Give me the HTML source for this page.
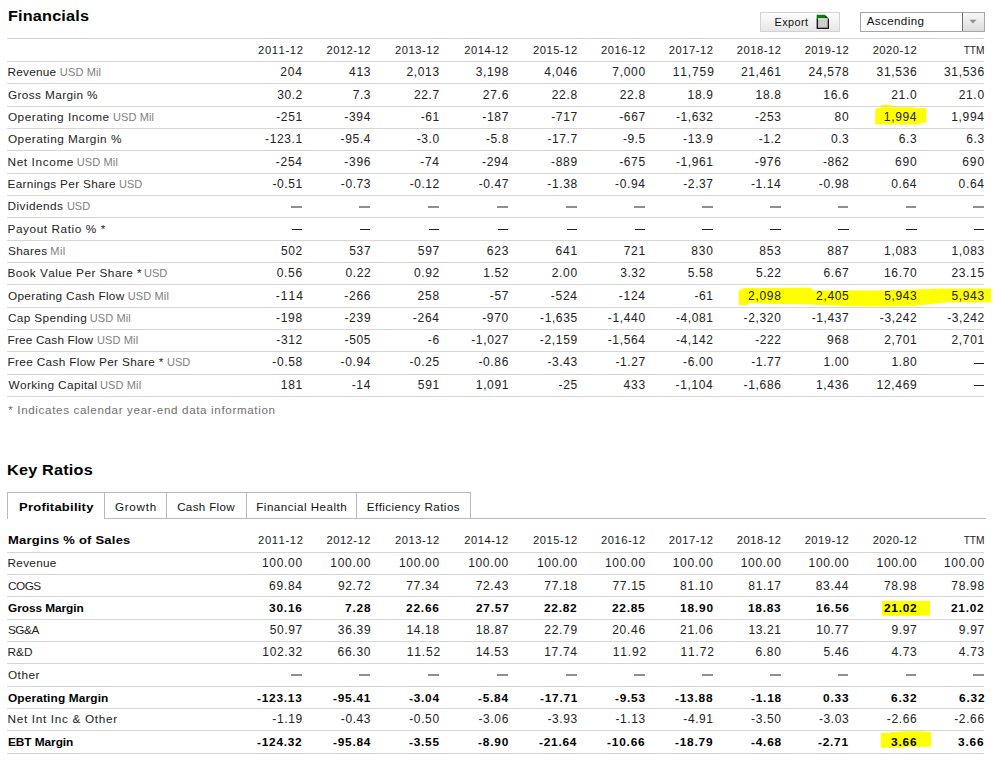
<!DOCTYPE html>
<html><head><meta charset="utf-8"><title>Financials</title>
<style>
html,body{margin:0;padding:0;background:#fff;}
body{width:1000px;height:762px;position:relative;overflow:hidden;font-family:"Liberation Sans",sans-serif;}
.t{position:absolute;white-space:nowrap;line-height:20px;font-kerning:none;-webkit-text-stroke:0.0px currentColor;}
</style></head><body>
<div class="t" style="left:7.72px;top:6.00px;font-size:14.5px;letter-spacing:0.150px;transform:scaleX(1.120);transform-origin:0 0;font-weight:bold;color:#000;">Financials</div>
<div style="position:absolute;left:760px;top:12px;width:80px;height:20px;box-sizing:border-box;border:1px solid #d2d2d2;background:linear-gradient(#fdfdfd,#e6e6e6);"></div>
<div class="t" style="left:774.61px;top:12.00px;font-size:10.9px;letter-spacing:0.392px;color:#111;">Export</div>
<svg style="position:absolute;left:816px;top:14px" width="14" height="16" viewBox="0 0 14 16">
<path d="M0.6 4.2 H8.8 V0.8 L13 5 V15 H0.6 Z" fill="#1c1c1c"/>
<rect x="0.7" y="0.8" width="8.2" height="3.6" fill="#008400"/>
<rect x="2" y="4.4" width="9.7" height="9.3" fill="#c4c4c4"/>
<rect x="2" y="4.4" width="9.7" height="1.1" fill="#ededed"/>
<path d="M4.6 6.6 V12.6 M7.1 6.6 V12.6 M9.6 6.6 V12.6" stroke="#e6e6e6" stroke-width="0.8"/>
</svg>
<div style="position:absolute;left:860px;top:12px;width:125px;height:20px;box-sizing:border-box;border:1px solid #a6a6a6;background:#fff;"></div>
<div style="position:absolute;left:962px;top:13px;width:22px;height:18px;box-sizing:border-box;border-left:1px solid #707070;background:linear-gradient(#f8f8f8,#dcdcdc);"></div>
<svg style="position:absolute;left:969px;top:19px" width="8" height="5"><path d="M0.5 0.8 H7.5 L4 4.5 Z" fill="#8c8c8c"/></svg>
<div class="t" style="left:866.78px;top:11.00px;font-size:11.6px;letter-spacing:0.375px;color:#111;">Ascending</div>
<div style="position:absolute;left:7px;top:37.90px;width:977px;height:1px;background:#d6d6d6"></div>
<div style="position:absolute;left:7px;top:61.10px;width:977px;height:1px;background:#d6d6d6"></div>
<div class="t" style="left:258.04px;top:40.00px;font-size:11.2px;letter-spacing:0.640px;color:#1a1a1a;">2011-12</div>
<div class="t" style="left:326.44px;top:40.00px;font-size:11.2px;letter-spacing:0.503px;color:#1a1a1a;">2012-12</div>
<div class="t" style="left:395.04px;top:40.00px;font-size:11.2px;letter-spacing:0.503px;color:#1a1a1a;">2013-12</div>
<div class="t" style="left:464.24px;top:40.00px;font-size:11.2px;letter-spacing:0.503px;color:#1a1a1a;">2014-12</div>
<div class="t" style="left:533.04px;top:40.00px;font-size:11.2px;letter-spacing:0.503px;color:#1a1a1a;">2015-12</div>
<div class="t" style="left:601.04px;top:40.00px;font-size:11.2px;letter-spacing:0.503px;color:#1a1a1a;">2016-12</div>
<div class="t" style="left:668.84px;top:40.00px;font-size:11.2px;letter-spacing:0.503px;color:#1a1a1a;">2017-12</div>
<div class="t" style="left:736.84px;top:40.00px;font-size:11.2px;letter-spacing:0.503px;color:#1a1a1a;">2018-12</div>
<div class="t" style="left:804.64px;top:40.00px;font-size:11.2px;letter-spacing:0.503px;color:#1a1a1a;">2019-12</div>
<div class="t" style="left:872.64px;top:40.00px;font-size:11.2px;letter-spacing:0.503px;color:#1a1a1a;">2020-12</div>
<div class="t" style="left:963.78px;top:41.00px;font-size:10.2px;letter-spacing:-0.154px;color:#222;">TTM</div>
<svg style="position:absolute;left:0;top:0" width="1000" height="762"><g fill="#ffff00"><path d="M875.2 109.5 L876 108.2 L880.5 108 L881 105.2 L886 104.8 L892.5 105.6 L893.5 107.2 L914 107.2 L915 108 L926.3 108 L926.3 122.8 L921 122.8 L920.5 124.5 L875.2 124.5 Z"/><path d="M738.7 290.5 L744 288 L811 287.7 L813 290.5 L877 290.5 L913 289.5 L947 288.5 L991 288.5 L991 302.4 L947 302.4 L913 305.9 L878 306.6 L845 305.9 L808 304.5 L748 303.1 L748 304.9 L738.7 304.9 Z"/><path d="M881.9 601 L930 601 L930 615.8 L881.9 615.8 Z"/><path d="M880.8 733 L890.3 733 L890.3 732 L899.5 732 L899.5 731.2 L924.6 731.2 L924.6 732 L931 732 L931 746.8 L904.3 746.8 L904.3 747.7 L880.8 747.7 Z"/></g></svg>
<div style="position:absolute;left:7px;top:83.42px;width:977px;height:1px;background:#d6d6d6"></div>
<div class="t" style="left:7.53px;top:62.00px;font-size:11.8px;letter-spacing:0.226px;color:#222;">Revenue</div>
<div class="t" style="left:59.86px;top:62.00px;font-size:11.0px;letter-spacing:0.123px;color:#808080;">USD Mil</div>
<div class="t" style="left:280.23px;top:62.00px;font-size:12.0px;letter-spacing:0.843px;color:#222;">204</div>
<div class="t" style="left:348.96px;top:62.00px;font-size:12.0px;letter-spacing:0.766px;color:#222;">413</div>
<div class="t" style="left:406.40px;top:62.00px;font-size:12.0px;letter-spacing:0.672px;color:#222;">2,013</div>
<div class="t" style="left:475.65px;top:62.00px;font-size:12.0px;letter-spacing:0.661px;color:#222;">3,198</div>
<div class="t" style="left:544.24px;top:62.00px;font-size:12.0px;letter-spacing:0.712px;color:#222;">4,046</div>
<div class="t" style="left:612.34px;top:62.00px;font-size:12.0px;letter-spacing:0.675px;color:#222;">7,000</div>
<div class="t" style="left:672.78px;top:62.00px;font-size:12.0px;letter-spacing:0.874px;color:#222;">11,759</div>
<div class="t" style="left:740.92px;top:62.00px;font-size:12.0px;letter-spacing:0.670px;color:#222;">21,461</div>
<div class="t" style="left:808.44px;top:62.00px;font-size:12.0px;letter-spacing:0.714px;color:#222;">24,578</div>
<div class="t" style="left:876.56px;top:62.00px;font-size:12.0px;letter-spacing:0.690px;color:#222;">31,536</div>
<div class="t" style="left:943.96px;top:62.00px;font-size:12.0px;letter-spacing:0.690px;color:#222;">31,536</div>
<div style="position:absolute;left:7px;top:105.74px;width:977px;height:1px;background:#d6d6d6"></div>
<div class="t" style="left:7.91px;top:85.00px;font-size:11.8px;letter-spacing:0.394px;color:#222;">Gross Margin %</div>
<div class="t" style="left:277.24px;top:85.00px;font-size:12.0px;letter-spacing:0.535px;color:#222;">30.2</div>
<div class="t" style="left:352.73px;top:85.00px;font-size:12.0px;letter-spacing:0.559px;color:#222;">7.3</div>
<div class="t" style="left:413.88px;top:85.00px;font-size:12.0px;letter-spacing:0.653px;color:#222;">22.7</div>
<div class="t" style="left:482.82px;top:85.00px;font-size:12.0px;letter-spacing:0.716px;color:#222;">27.6</div>
<div class="t" style="left:551.68px;top:85.00px;font-size:12.0px;letter-spacing:0.695px;color:#222;">22.8</div>
<div class="t" style="left:619.68px;top:85.00px;font-size:12.0px;letter-spacing:0.695px;color:#222;">22.8</div>
<div class="t" style="left:687.62px;top:85.00px;font-size:12.0px;letter-spacing:0.663px;color:#222;">18.9</div>
<div class="t" style="left:755.60px;top:85.00px;font-size:12.0px;letter-spacing:0.655px;color:#222;">18.8</div>
<div class="t" style="left:823.34px;top:85.00px;font-size:12.0px;letter-spacing:0.676px;color:#222;">16.6</div>
<div class="t" style="left:891.26px;top:85.00px;font-size:12.0px;letter-spacing:0.683px;color:#222;">21.0</div>
<div class="t" style="left:958.66px;top:85.00px;font-size:12.0px;letter-spacing:0.683px;color:#222;">21.0</div>
<div style="position:absolute;left:7px;top:128.06px;width:977px;height:1px;background:#d6d6d6"></div>
<div class="t" style="left:7.94px;top:107.00px;font-size:11.8px;letter-spacing:0.492px;color:#222;">Operating Income</div>
<div class="t" style="left:112.96px;top:107.00px;font-size:11.0px;letter-spacing:0.123px;color:#808080;">USD Mil</div>
<div class="t" style="left:276.24px;top:107.00px;font-size:12.0px;letter-spacing:0.639px;color:#222;">-251</div>
<div class="t" style="left:344.22px;top:107.00px;font-size:12.0px;letter-spacing:0.704px;color:#222;">-394</div>
<div class="t" style="left:420.66px;top:107.00px;font-size:12.0px;letter-spacing:0.586px;color:#222;">-61</div>
<div class="t" style="left:482.37px;top:107.00px;font-size:12.0px;letter-spacing:0.671px;color:#222;">-187</div>
<div class="t" style="left:551.17px;top:107.00px;font-size:12.0px;letter-spacing:0.671px;color:#222;">-717</div>
<div class="t" style="left:619.17px;top:107.00px;font-size:12.0px;letter-spacing:0.671px;color:#222;">-667</div>
<div class="t" style="left:676.02px;top:107.00px;font-size:12.0px;letter-spacing:0.592px;color:#222;">-1,632</div>
<div class="t" style="left:754.90px;top:107.00px;font-size:12.0px;letter-spacing:0.666px;color:#222;">-253</div>
<div class="t" style="left:834.41px;top:107.00px;font-size:12.0px;letter-spacing:0.911px;color:#222;">80</div>
<div class="t" style="left:883.83px;top:107.00px;font-size:12.0px;letter-spacing:0.671px;color:#222;">1,994</div>
<div class="t" style="left:951.23px;top:107.00px;font-size:12.0px;letter-spacing:0.671px;color:#222;">1,994</div>
<div style="position:absolute;left:7px;top:150.38px;width:977px;height:1px;background:#d6d6d6"></div>
<div class="t" style="left:7.94px;top:129.00px;font-size:11.8px;letter-spacing:0.502px;color:#222;">Operating Margin %</div>
<div class="t" style="left:265.12px;top:129.00px;font-size:12.0px;letter-spacing:0.606px;color:#222;">-123.1</div>
<div class="t" style="left:340.52px;top:129.00px;font-size:12.0px;letter-spacing:0.621px;color:#222;">-95.4</div>
<div class="t" style="left:416.66px;top:129.00px;font-size:12.0px;letter-spacing:0.574px;color:#222;">-3.0</div>
<div class="t" style="left:485.89px;top:129.00px;font-size:12.0px;letter-spacing:0.585px;color:#222;">-5.8</div>
<div class="t" style="left:547.47px;top:129.00px;font-size:12.0px;letter-spacing:0.596px;color:#222;">-17.7</div>
<div class="t" style="left:622.91px;top:129.00px;font-size:12.0px;letter-spacing:0.503px;color:#222;">-9.5</div>
<div class="t" style="left:683.09px;top:129.00px;font-size:12.0px;letter-spacing:0.633px;color:#222;">-13.9</div>
<div class="t" style="left:758.86px;top:129.00px;font-size:12.0px;letter-spacing:0.487px;color:#222;">-1.2</div>
<div class="t" style="left:830.89px;top:129.00px;font-size:12.0px;letter-spacing:0.578px;color:#222;">0.3</div>
<div class="t" style="left:898.79px;top:129.00px;font-size:12.0px;letter-spacing:0.628px;color:#222;">6.3</div>
<div class="t" style="left:966.19px;top:129.00px;font-size:12.0px;letter-spacing:0.628px;color:#222;">6.3</div>
<div style="position:absolute;left:7px;top:172.70px;width:977px;height:1px;background:#d6d6d6"></div>
<div class="t" style="left:7.53px;top:152.00px;font-size:11.8px;letter-spacing:0.617px;color:#222;">Net Income</div>
<div class="t" style="left:76.76px;top:152.00px;font-size:11.0px;letter-spacing:0.123px;color:#808080;">USD Mil</div>
<div class="t" style="left:275.82px;top:152.00px;font-size:12.0px;letter-spacing:0.704px;color:#222;">-254</div>
<div class="t" style="left:344.30px;top:152.00px;font-size:12.0px;letter-spacing:0.733px;color:#222;">-396</div>
<div class="t" style="left:420.24px;top:152.00px;font-size:12.0px;letter-spacing:0.684px;color:#222;">-74</div>
<div class="t" style="left:482.02px;top:152.00px;font-size:12.0px;letter-spacing:0.704px;color:#222;">-294</div>
<div class="t" style="left:550.99px;top:152.00px;font-size:12.0px;letter-spacing:0.720px;color:#222;">-889</div>
<div class="t" style="left:619.19px;top:152.00px;font-size:12.0px;letter-spacing:0.631px;color:#222;">-675</div>
<div class="t" style="left:675.92px;top:152.00px;font-size:12.0px;letter-spacing:0.606px;color:#222;">-1,961</div>
<div class="t" style="left:754.70px;top:152.00px;font-size:12.0px;letter-spacing:0.733px;color:#222;">-976</div>
<div class="t" style="left:822.94px;top:152.00px;font-size:12.0px;letter-spacing:0.614px;color:#222;">-862</div>
<div class="t" style="left:894.92px;top:152.00px;font-size:12.0px;letter-spacing:0.860px;color:#222;">690</div>
<div class="t" style="left:962.32px;top:152.00px;font-size:12.0px;letter-spacing:0.860px;color:#222;">690</div>
<div style="position:absolute;left:7px;top:195.02px;width:977px;height:1px;background:#d6d6d6"></div>
<div class="t" style="left:7.53px;top:174.00px;font-size:11.8px;letter-spacing:0.306px;color:#222;">Earnings Per Share</div>
<div class="t" style="left:119.06px;top:174.00px;font-size:11.0px;letter-spacing:-0.030px;color:#808080;">USD</div>
<div class="t" style="left:272.54px;top:174.00px;font-size:12.0px;letter-spacing:0.572px;color:#222;">-0.51</div>
<div class="t" style="left:340.80px;top:174.00px;font-size:12.0px;letter-spacing:0.593px;color:#222;">-0.73</div>
<div class="t" style="left:409.64px;top:174.00px;font-size:12.0px;letter-spacing:0.554px;color:#222;">-0.12</div>
<div class="t" style="left:478.67px;top:174.00px;font-size:12.0px;letter-spacing:0.596px;color:#222;">-0.47</div>
<div class="t" style="left:547.27px;top:174.00px;font-size:12.0px;letter-spacing:0.627px;color:#222;">-1.38</div>
<div class="t" style="left:615.12px;top:174.00px;font-size:12.0px;letter-spacing:0.621px;color:#222;">-0.94</div>
<div class="t" style="left:683.27px;top:174.00px;font-size:12.0px;letter-spacing:0.596px;color:#222;">-2.37</div>
<div class="t" style="left:750.92px;top:174.00px;font-size:12.0px;letter-spacing:0.621px;color:#222;">-1.14</div>
<div class="t" style="left:818.87px;top:174.00px;font-size:12.0px;letter-spacing:0.627px;color:#222;">-0.98</div>
<div class="t" style="left:891.19px;top:174.00px;font-size:12.0px;letter-spacing:0.667px;color:#222;">0.64</div>
<div class="t" style="left:958.59px;top:174.00px;font-size:12.0px;letter-spacing:0.667px;color:#222;">0.64</div>
<div style="position:absolute;left:7px;top:217.34px;width:977px;height:1px;background:#d6d6d6"></div>
<div class="t" style="left:7.53px;top:196.00px;font-size:11.8px;letter-spacing:0.459px;color:#222;">Dividends</div>
<div class="t" style="left:66.96px;top:196.00px;font-size:11.0px;letter-spacing:-0.030px;color:#808080;">USD</div>
<div style="position:absolute;left:291.0px;top:206px;width:10.800000000000011px;height:2px;background:#8f8f8f"></div>
<div style="position:absolute;left:359.4px;top:206px;width:10.800000000000011px;height:2px;background:#8f8f8f"></div>
<div style="position:absolute;left:428.0px;top:206px;width:10.800000000000011px;height:2px;background:#8f8f8f"></div>
<div style="position:absolute;left:497.2px;top:206px;width:10.800000000000011px;height:2px;background:#8f8f8f"></div>
<div style="position:absolute;left:566.0px;top:206px;width:10.800000000000068px;height:2px;background:#8f8f8f"></div>
<div style="position:absolute;left:634.0px;top:206px;width:10.800000000000068px;height:2px;background:#8f8f8f"></div>
<div style="position:absolute;left:701.8px;top:206px;width:10.800000000000068px;height:2px;background:#8f8f8f"></div>
<div style="position:absolute;left:769.8px;top:206px;width:10.800000000000068px;height:2px;background:#8f8f8f"></div>
<div style="position:absolute;left:837.6px;top:206px;width:10.800000000000068px;height:2px;background:#8f8f8f"></div>
<div style="position:absolute;left:905.6px;top:206px;width:10.800000000000068px;height:2px;background:#8f8f8f"></div>
<div style="position:absolute;left:973.0px;top:206px;width:10.800000000000068px;height:2px;background:#8f8f8f"></div>
<div style="position:absolute;left:7px;top:239.66px;width:977px;height:1px;background:#d6d6d6"></div>
<div class="t" style="left:7.53px;top:219.00px;font-size:11.8px;letter-spacing:0.570px;color:#222;">Payout Ratio % *</div>
<div style="position:absolute;left:291.6px;top:229px;width:10.399999999999977px;height:1px;background:#222"></div>
<div style="position:absolute;left:360.0px;top:229px;width:10.399999999999977px;height:1px;background:#222"></div>
<div style="position:absolute;left:428.6px;top:229px;width:10.399999999999977px;height:1px;background:#222"></div>
<div style="position:absolute;left:497.8px;top:229px;width:10.399999999999977px;height:1px;background:#222"></div>
<div style="position:absolute;left:566.6px;top:229px;width:10.399999999999977px;height:1px;background:#222"></div>
<div style="position:absolute;left:634.6px;top:229px;width:10.399999999999977px;height:1px;background:#222"></div>
<div style="position:absolute;left:702.4px;top:229px;width:10.399999999999977px;height:1px;background:#222"></div>
<div style="position:absolute;left:770.4px;top:229px;width:10.399999999999977px;height:1px;background:#222"></div>
<div style="position:absolute;left:838.2px;top:229px;width:10.399999999999977px;height:1px;background:#222"></div>
<div style="position:absolute;left:906.2px;top:229px;width:10.399999999999977px;height:1px;background:#222"></div>
<div style="position:absolute;left:973.6px;top:229px;width:10.399999999999977px;height:1px;background:#222"></div>
<div style="position:absolute;left:7px;top:261.98px;width:977px;height:1px;background:#d6d6d6"></div>
<div class="t" style="left:7.97px;top:241.00px;font-size:11.8px;letter-spacing:0.352px;color:#222;">Shares</div>
<div class="t" style="left:50.30px;top:241.00px;font-size:11.0px;letter-spacing:0.440px;color:#808080;">Mil</div>
<div class="t" style="left:280.92px;top:241.00px;font-size:12.0px;letter-spacing:0.627px;color:#222;">502</div>
<div class="t" style="left:349.15px;top:241.00px;font-size:12.0px;letter-spacing:0.712px;color:#222;">537</div>
<div class="t" style="left:417.75px;top:241.00px;font-size:12.0px;letter-spacing:0.712px;color:#222;">597</div>
<div class="t" style="left:486.68px;top:241.00px;font-size:12.0px;letter-spacing:0.808px;color:#222;">623</div>
<div class="t" style="left:555.62px;top:241.00px;font-size:12.0px;letter-spacing:0.766px;color:#222;">641</div>
<div class="t" style="left:623.75px;top:241.00px;font-size:12.0px;letter-spacing:0.698px;color:#222;">721</div>
<div class="t" style="left:691.19px;top:241.00px;font-size:12.0px;letter-spacing:0.827px;color:#222;">830</div>
<div class="t" style="left:759.34px;top:241.00px;font-size:12.0px;letter-spacing:0.775px;color:#222;">853</div>
<div class="t" style="left:827.21px;top:241.00px;font-size:12.0px;letter-spacing:0.781px;color:#222;">887</div>
<div class="t" style="left:884.12px;top:241.00px;font-size:12.0px;letter-spacing:0.643px;color:#222;">1,083</div>
<div class="t" style="left:951.52px;top:241.00px;font-size:12.0px;letter-spacing:0.643px;color:#222;">1,083</div>
<div style="position:absolute;left:7px;top:284.30px;width:977px;height:1px;background:#d6d6d6"></div>
<div class="t" style="left:7.53px;top:263.00px;font-size:11.8px;letter-spacing:0.452px;color:#222;">Book Value Per Share *</div>
<div class="t" style="left:144.06px;top:263.00px;font-size:11.0px;letter-spacing:-0.030px;color:#808080;">USD</div>
<div class="t" style="left:276.68px;top:263.00px;font-size:12.0px;letter-spacing:0.697px;color:#222;">0.56</div>
<div class="t" style="left:345.51px;top:263.00px;font-size:12.0px;letter-spacing:0.577px;color:#222;">0.22</div>
<div class="t" style="left:414.11px;top:263.00px;font-size:12.0px;letter-spacing:0.577px;color:#222;">0.92</div>
<div class="t" style="left:483.37px;top:263.00px;font-size:12.0px;letter-spacing:0.557px;color:#222;">1.52</div>
<div class="t" style="left:551.66px;top:263.00px;font-size:12.0px;letter-spacing:0.683px;color:#222;">2.00</div>
<div class="t" style="left:620.24px;top:263.00px;font-size:12.0px;letter-spacing:0.535px;color:#222;">3.32</div>
<div class="t" style="left:687.65px;top:263.00px;font-size:12.0px;letter-spacing:0.640px;color:#222;">5.58</div>
<div class="t" style="left:756.02px;top:263.00px;font-size:12.0px;letter-spacing:0.542px;color:#222;">5.22</div>
<div class="t" style="left:823.44px;top:263.00px;font-size:12.0px;letter-spacing:0.667px;color:#222;">6.67</div>
<div class="t" style="left:883.96px;top:263.00px;font-size:12.0px;letter-spacing:0.669px;color:#222;">16.70</div>
<div class="t" style="left:951.49px;top:263.00px;font-size:12.0px;letter-spacing:0.646px;color:#222;">23.15</div>
<div style="position:absolute;left:7px;top:306.62px;width:977px;height:1px;background:#d6d6d6"></div>
<div class="t" style="left:7.94px;top:286.00px;font-size:11.8px;letter-spacing:0.304px;color:#222;">Operating Cash Flow</div>
<div class="t" style="left:127.76px;top:286.00px;font-size:11.0px;letter-spacing:0.123px;color:#808080;">USD Mil</div>
<div class="t" style="left:275.82px;top:286.00px;font-size:12.0px;letter-spacing:1.002px;color:#222;">-114</div>
<div class="t" style="left:344.30px;top:286.00px;font-size:12.0px;letter-spacing:0.733px;color:#222;">-266</div>
<div class="t" style="left:417.38px;top:286.00px;font-size:12.0px;letter-spacing:0.856px;color:#222;">258</div>
<div class="t" style="left:489.79px;top:286.00px;font-size:12.0px;letter-spacing:0.634px;color:#222;">-57</div>
<div class="t" style="left:550.82px;top:286.00px;font-size:12.0px;letter-spacing:0.704px;color:#222;">-524</div>
<div class="t" style="left:618.82px;top:286.00px;font-size:12.0px;letter-spacing:0.704px;color:#222;">-124</div>
<div class="t" style="left:694.46px;top:286.00px;font-size:12.0px;letter-spacing:0.586px;color:#222;">-61</div>
<div class="t" style="left:748.06px;top:286.00px;font-size:12.0px;letter-spacing:0.707px;color:#222;">2,098</div>
<div class="t" style="left:816.09px;top:286.00px;font-size:12.0px;letter-spacing:0.646px;color:#222;">2,405</div>
<div class="t" style="left:884.16px;top:286.00px;font-size:12.0px;letter-spacing:0.632px;color:#222;">5,943</div>
<div class="t" style="left:951.56px;top:286.00px;font-size:12.0px;letter-spacing:0.632px;color:#222;">5,943</div>
<div style="position:absolute;left:7px;top:328.94px;width:977px;height:1px;background:#d6d6d6"></div>
<div class="t" style="left:7.91px;top:308.00px;font-size:11.8px;letter-spacing:0.369px;color:#222;">Cap Spending</div>
<div class="t" style="left:89.66px;top:308.00px;font-size:11.0px;letter-spacing:0.123px;color:#808080;">USD Mil</div>
<div class="t" style="left:275.96px;top:308.00px;font-size:12.0px;letter-spacing:0.712px;color:#222;">-198</div>
<div class="t" style="left:344.39px;top:308.00px;font-size:12.0px;letter-spacing:0.720px;color:#222;">-239</div>
<div class="t" style="left:412.82px;top:308.00px;font-size:12.0px;letter-spacing:0.704px;color:#222;">-264</div>
<div class="t" style="left:482.14px;top:308.00px;font-size:12.0px;letter-spacing:0.701px;color:#222;">-970</div>
<div class="t" style="left:540.07px;top:308.00px;font-size:12.0px;letter-spacing:0.602px;color:#222;">-1,635</div>
<div class="t" style="left:607.82px;top:308.00px;font-size:12.0px;letter-spacing:0.644px;color:#222;">-1,440</div>
<div class="t" style="left:675.92px;top:308.00px;font-size:12.0px;letter-spacing:0.606px;color:#222;">-4,081</div>
<div class="t" style="left:743.62px;top:308.00px;font-size:12.0px;letter-spacing:0.644px;color:#222;">-2,320</div>
<div class="t" style="left:811.65px;top:308.00px;font-size:12.0px;letter-spacing:0.626px;color:#222;">-1,437</div>
<div class="t" style="left:879.82px;top:308.00px;font-size:12.0px;letter-spacing:0.592px;color:#222;">-3,242</div>
<div class="t" style="left:947.22px;top:308.00px;font-size:12.0px;letter-spacing:0.592px;color:#222;">-3,242</div>
<div style="position:absolute;left:7px;top:351.26px;width:977px;height:1px;background:#d6d6d6"></div>
<div class="t" style="left:7.53px;top:330.00px;font-size:11.8px;letter-spacing:0.173px;color:#222;">Free Cash Flow</div>
<div class="t" style="left:97.06px;top:330.00px;font-size:11.0px;letter-spacing:0.123px;color:#808080;">USD Mil</div>
<div class="t" style="left:276.34px;top:330.00px;font-size:12.0px;letter-spacing:0.614px;color:#222;">-312</div>
<div class="t" style="left:344.59px;top:330.00px;font-size:12.0px;letter-spacing:0.631px;color:#222;">-505</div>
<div class="t" style="left:427.74px;top:330.00px;font-size:12.0px;letter-spacing:0.713px;color:#222;">-6</div>
<div class="t" style="left:471.25px;top:330.00px;font-size:12.0px;letter-spacing:0.626px;color:#222;">-1,027</div>
<div class="t" style="left:539.87px;top:330.00px;font-size:12.0px;letter-spacing:0.655px;color:#222;">-2,159</div>
<div class="t" style="left:607.70px;top:330.00px;font-size:12.0px;letter-spacing:0.645px;color:#222;">-1,564</div>
<div class="t" style="left:676.02px;top:330.00px;font-size:12.0px;letter-spacing:0.592px;color:#222;">-4,142</div>
<div class="t" style="left:755.14px;top:330.00px;font-size:12.0px;letter-spacing:0.614px;color:#222;">-222</div>
<div class="t" style="left:826.91px;top:330.00px;font-size:12.0px;letter-spacing:0.892px;color:#222;">968</div>
<div class="t" style="left:884.14px;top:330.00px;font-size:12.0px;letter-spacing:0.652px;color:#222;">2,701</div>
<div class="t" style="left:951.54px;top:330.00px;font-size:12.0px;letter-spacing:0.652px;color:#222;">2,701</div>
<div style="position:absolute;left:7px;top:373.58px;width:977px;height:1px;background:#d6d6d6"></div>
<div class="t" style="left:7.53px;top:352.00px;font-size:11.8px;letter-spacing:0.332px;color:#222;">Free Cash Flow Per Share *</div>
<div class="t" style="left:167.06px;top:352.00px;font-size:11.0px;letter-spacing:-0.030px;color:#808080;">USD</div>
<div class="t" style="left:272.27px;top:352.00px;font-size:12.0px;letter-spacing:0.627px;color:#222;">-0.58</div>
<div class="t" style="left:340.52px;top:352.00px;font-size:12.0px;letter-spacing:0.621px;color:#222;">-0.94</div>
<div class="t" style="left:409.49px;top:352.00px;font-size:12.0px;letter-spacing:0.566px;color:#222;">-0.25</div>
<div class="t" style="left:478.40px;top:352.00px;font-size:12.0px;letter-spacing:0.643px;color:#222;">-0.86</div>
<div class="t" style="left:547.40px;top:352.00px;font-size:12.0px;letter-spacing:0.593px;color:#222;">-3.43</div>
<div class="t" style="left:615.47px;top:352.00px;font-size:12.0px;letter-spacing:0.596px;color:#222;">-1.27</div>
<div class="t" style="left:683.04px;top:352.00px;font-size:12.0px;letter-spacing:0.619px;color:#222;">-6.00</div>
<div class="t" style="left:751.27px;top:352.00px;font-size:12.0px;letter-spacing:0.596px;color:#222;">-1.77</div>
<div class="t" style="left:823.38px;top:352.00px;font-size:12.0px;letter-spacing:0.644px;color:#222;">1.00</div>
<div class="t" style="left:891.38px;top:352.00px;font-size:12.0px;letter-spacing:0.644px;color:#222;">1.80</div>
<div style="position:absolute;left:973.6px;top:363px;width:10.399999999999977px;height:1px;background:#222"></div>
<div style="position:absolute;left:7px;top:395.90px;width:977px;height:1px;background:#d6d6d6"></div>
<div class="t" style="left:8.46px;top:375.00px;font-size:11.8px;letter-spacing:0.390px;color:#222;">Working Capital</div>
<div class="t" style="left:100.06px;top:375.00px;font-size:11.0px;letter-spacing:0.123px;color:#808080;">USD Mil</div>
<div class="t" style="left:280.78px;top:375.00px;font-size:12.0px;letter-spacing:0.686px;color:#222;">181</div>
<div class="t" style="left:351.64px;top:375.00px;font-size:12.0px;letter-spacing:0.684px;color:#222;">-14</div>
<div class="t" style="left:417.82px;top:375.00px;font-size:12.0px;letter-spacing:0.664px;color:#222;">591</div>
<div class="t" style="left:475.86px;top:375.00px;font-size:12.0px;letter-spacing:0.622px;color:#222;">1,091</div>
<div class="t" style="left:558.61px;top:375.00px;font-size:12.0px;letter-spacing:0.574px;color:#222;">-25</div>
<div class="t" style="left:623.56px;top:375.00px;font-size:12.0px;letter-spacing:0.766px;color:#222;">433</div>
<div class="t" style="left:675.50px;top:375.00px;font-size:12.0px;letter-spacing:0.645px;color:#222;">-1,104</div>
<div class="t" style="left:743.58px;top:375.00px;font-size:12.0px;letter-spacing:0.663px;color:#222;">-1,686</div>
<div class="t" style="left:815.92px;top:375.00px;font-size:12.0px;letter-spacing:0.693px;color:#222;">1,436</div>
<div class="t" style="left:876.58px;top:375.00px;font-size:12.0px;letter-spacing:0.695px;color:#222;">12,469</div>
<div style="position:absolute;left:973.6px;top:385px;width:10.399999999999977px;height:1px;background:#222"></div>
<div class="t" style="left:8.22px;top:400.00px;font-size:11.6px;letter-spacing:0.659px;color:#6f6f6f;">* Indicates calendar year-end data information</div>
<div class="t" style="left:7.42px;top:460.00px;font-size:14.5px;letter-spacing:0.178px;transform:scaleX(1.120);transform-origin:0 0;font-weight:bold;color:#000;">Key Ratios</div>
<div style="position:absolute;left:7px;top:492px;width:97px;height:27px;box-sizing:border-box;border:1px solid #b9b9b9;border-bottom:none;border-right:none;background:#fff"></div>
<div class="t" style="left:18.64px;top:497.00px;font-size:11.6px;letter-spacing:0.221px;transform:scaleX(1.120);transform-origin:0 0;font-weight:bold;color:#000;">Profitability</div>
<div style="position:absolute;left:104px;top:492px;width:63px;height:27px;box-sizing:border-box;border:1px solid #b9b9b9;background:#fff"></div>
<div class="t" style="left:114.92px;top:497.00px;font-size:11.6px;letter-spacing:0.787px;color:#111;">Growth</div>
<div style="position:absolute;left:166px;top:492px;width:81px;height:27px;box-sizing:border-box;border:1px solid #b9b9b9;background:#fff"></div>
<div class="t" style="left:177.17px;top:497.00px;font-size:11.6px;letter-spacing:0.343px;color:#111;">Cash Flow</div>
<div style="position:absolute;left:246px;top:492px;width:111px;height:27px;box-sizing:border-box;border:1px solid #b9b9b9;background:#fff"></div>
<div class="t" style="left:256.30px;top:497.00px;font-size:11.6px;letter-spacing:0.484px;color:#111;">Financial Health</div>
<div style="position:absolute;left:356px;top:492px;width:115px;height:27px;box-sizing:border-box;border:1px solid #b9b9b9;background:#fff"></div>
<div class="t" style="left:366.80px;top:497.00px;font-size:11.6px;letter-spacing:0.442px;color:#111;">Efficiency Ratios</div>
<div style="position:absolute;left:470px;top:518px;width:516px;height:1px;background:#b9b9b9"></div>
<div class="t" style="left:7.54px;top:530.00px;font-size:11.6px;letter-spacing:0.210px;transform:scaleX(1.120);transform-origin:0 0;font-weight:bold;color:#000;">Margins % of Sales</div>
<div class="t" style="left:258.04px;top:530.00px;font-size:11.2px;letter-spacing:0.640px;color:#1a1a1a;">2011-12</div>
<div class="t" style="left:326.44px;top:530.00px;font-size:11.2px;letter-spacing:0.503px;color:#1a1a1a;">2012-12</div>
<div class="t" style="left:395.04px;top:530.00px;font-size:11.2px;letter-spacing:0.503px;color:#1a1a1a;">2013-12</div>
<div class="t" style="left:464.24px;top:530.00px;font-size:11.2px;letter-spacing:0.503px;color:#1a1a1a;">2014-12</div>
<div class="t" style="left:533.04px;top:530.00px;font-size:11.2px;letter-spacing:0.503px;color:#1a1a1a;">2015-12</div>
<div class="t" style="left:601.04px;top:530.00px;font-size:11.2px;letter-spacing:0.503px;color:#1a1a1a;">2016-12</div>
<div class="t" style="left:668.84px;top:530.00px;font-size:11.2px;letter-spacing:0.503px;color:#1a1a1a;">2017-12</div>
<div class="t" style="left:736.84px;top:530.00px;font-size:11.2px;letter-spacing:0.503px;color:#1a1a1a;">2018-12</div>
<div class="t" style="left:804.64px;top:530.00px;font-size:11.2px;letter-spacing:0.503px;color:#1a1a1a;">2019-12</div>
<div class="t" style="left:872.64px;top:530.00px;font-size:11.2px;letter-spacing:0.503px;color:#1a1a1a;">2020-12</div>
<div class="t" style="left:963.78px;top:531.00px;font-size:10.2px;letter-spacing:-0.154px;color:#222;">TTM</div>
<div style="position:absolute;left:7px;top:551.80px;width:977px;height:1px;background:#d6d6d6"></div>
<div style="position:absolute;left:7px;top:574.10px;width:977px;height:1px;background:#d6d6d6"></div>
<div class="t" style="left:7.53px;top:553.00px;font-size:11.8px;letter-spacing:0.276px;color:#222;">Revenue</div>
<div class="t" style="left:261.94px;top:553.00px;font-size:12.0px;letter-spacing:0.684px;color:#222;">100.00</div>
<div class="t" style="left:330.34px;top:553.00px;font-size:12.0px;letter-spacing:0.684px;color:#222;">100.00</div>
<div class="t" style="left:398.94px;top:553.00px;font-size:12.0px;letter-spacing:0.684px;color:#222;">100.00</div>
<div class="t" style="left:468.14px;top:553.00px;font-size:12.0px;letter-spacing:0.684px;color:#222;">100.00</div>
<div class="t" style="left:536.94px;top:553.00px;font-size:12.0px;letter-spacing:0.684px;color:#222;">100.00</div>
<div class="t" style="left:604.94px;top:553.00px;font-size:12.0px;letter-spacing:0.684px;color:#222;">100.00</div>
<div class="t" style="left:672.74px;top:553.00px;font-size:12.0px;letter-spacing:0.684px;color:#222;">100.00</div>
<div class="t" style="left:740.74px;top:553.00px;font-size:12.0px;letter-spacing:0.684px;color:#222;">100.00</div>
<div class="t" style="left:808.54px;top:553.00px;font-size:12.0px;letter-spacing:0.684px;color:#222;">100.00</div>
<div class="t" style="left:876.54px;top:553.00px;font-size:12.0px;letter-spacing:0.684px;color:#222;">100.00</div>
<div class="t" style="left:943.94px;top:553.00px;font-size:12.0px;letter-spacing:0.684px;color:#222;">100.00</div>
<div style="position:absolute;left:7px;top:596.40px;width:977px;height:1px;background:#d6d6d6"></div>
<div class="t" style="left:7.91px;top:576.00px;font-size:11.8px;letter-spacing:-0.477px;color:#222;">COGS</div>
<div class="t" style="left:269.07px;top:576.00px;font-size:12.0px;letter-spacing:0.711px;color:#222;">69.84</div>
<div class="t" style="left:337.96px;top:576.00px;font-size:12.0px;letter-spacing:0.651px;color:#222;">92.72</div>
<div class="t" style="left:406.21px;top:576.00px;font-size:12.0px;letter-spacing:0.677px;color:#222;">77.34</div>
<div class="t" style="left:475.70px;top:576.00px;font-size:12.0px;letter-spacing:0.649px;color:#222;">72.43</div>
<div class="t" style="left:544.36px;top:576.00px;font-size:12.0px;letter-spacing:0.683px;color:#222;">77.18</div>
<div class="t" style="left:612.58px;top:576.00px;font-size:12.0px;letter-spacing:0.622px;color:#222;">77.15</div>
<div class="t" style="left:680.07px;top:576.00px;font-size:12.0px;letter-spacing:0.693px;color:#222;">81.10</div>
<div class="t" style="left:748.29px;top:576.00px;font-size:12.0px;letter-spacing:0.670px;color:#222;">81.17</div>
<div class="t" style="left:815.74px;top:576.00px;font-size:12.0px;letter-spacing:0.694px;color:#222;">83.44</div>
<div class="t" style="left:883.96px;top:576.00px;font-size:12.0px;letter-spacing:0.683px;color:#222;">78.98</div>
<div class="t" style="left:951.36px;top:576.00px;font-size:12.0px;letter-spacing:0.683px;color:#222;">78.98</div>
<div style="position:absolute;left:7px;top:618.70px;width:977px;height:1px;background:#d6d6d6"></div>
<div class="t" style="left:7.81px;top:598.00px;font-size:10.6px;letter-spacing:-0.057px;transform:scaleX(1.120);transform-origin:0 0;font-weight:bold;color:#000;">Gross Margin</div>
<div class="t" style="left:269.07px;top:598.00px;font-size:10.6px;letter-spacing:0.723px;transform:scaleX(1.120);transform-origin:0 0;font-weight:bold;color:#000;">30.16</div>
<div class="t" style="left:344.69px;top:598.00px;font-size:10.6px;letter-spacing:0.765px;transform:scaleX(1.120);transform-origin:0 0;font-weight:bold;color:#000;">7.28</div>
<div class="t" style="left:406.06px;top:598.00px;font-size:10.6px;letter-spacing:0.725px;transform:scaleX(1.120);transform-origin:0 0;font-weight:bold;color:#000;">22.66</div>
<div class="t" style="left:475.54px;top:598.00px;font-size:10.6px;letter-spacing:0.684px;transform:scaleX(1.120);transform-origin:0 0;font-weight:bold;color:#000;">27.57</div>
<div class="t" style="left:544.42px;top:598.00px;font-size:10.6px;letter-spacing:0.657px;transform:scaleX(1.120);transform-origin:0 0;font-weight:bold;color:#000;">22.82</div>
<div class="t" style="left:612.24px;top:598.00px;font-size:10.6px;letter-spacing:0.664px;transform:scaleX(1.120);transform-origin:0 0;font-weight:bold;color:#000;">22.85</div>
<div class="t" style="left:679.83px;top:598.00px;font-size:10.6px;letter-spacing:0.747px;transform:scaleX(1.120);transform-origin:0 0;font-weight:bold;color:#000;">18.90</div>
<div class="t" style="left:748.16px;top:598.00px;font-size:10.6px;letter-spacing:0.657px;transform:scaleX(1.120);transform-origin:0 0;font-weight:bold;color:#000;">18.83</div>
<div class="t" style="left:815.68px;top:598.00px;font-size:10.6px;letter-spacing:0.720px;transform:scaleX(1.120);transform-origin:0 0;font-weight:bold;color:#000;">16.56</div>
<div class="t" style="left:884.02px;top:598.00px;font-size:10.6px;letter-spacing:0.657px;transform:scaleX(1.120);transform-origin:0 0;font-weight:bold;color:#000;">21.02</div>
<div class="t" style="left:951.42px;top:598.00px;font-size:10.6px;letter-spacing:0.657px;transform:scaleX(1.120);transform-origin:0 0;font-weight:bold;color:#000;">21.02</div>
<div style="position:absolute;left:7px;top:641.00px;width:977px;height:1px;background:#d6d6d6"></div>
<div class="t" style="left:7.97px;top:620.00px;font-size:11.8px;letter-spacing:-0.482px;color:#222;">SG&amp;A</div>
<div class="t" style="left:269.63px;top:620.00px;font-size:12.0px;letter-spacing:0.635px;color:#222;">50.97</div>
<div class="t" style="left:337.87px;top:620.00px;font-size:12.0px;letter-spacing:0.666px;color:#222;">36.39</div>
<div class="t" style="left:406.38px;top:620.00px;font-size:12.0px;letter-spacing:0.677px;color:#222;">14.18</div>
<div class="t" style="left:475.78px;top:620.00px;font-size:12.0px;letter-spacing:0.646px;color:#222;">18.87</div>
<div class="t" style="left:544.28px;top:620.00px;font-size:12.0px;letter-spacing:0.712px;color:#222;">22.79</div>
<div class="t" style="left:612.20px;top:620.00px;font-size:12.0px;letter-spacing:0.723px;color:#222;">20.46</div>
<div class="t" style="left:680.00px;top:620.00px;font-size:12.0px;letter-spacing:0.723px;color:#222;">21.06</div>
<div class="t" style="left:748.46px;top:620.00px;font-size:12.0px;letter-spacing:0.622px;color:#222;">13.21</div>
<div class="t" style="left:816.18px;top:620.00px;font-size:12.0px;letter-spacing:0.646px;color:#222;">10.77</div>
<div class="t" style="left:891.41px;top:620.00px;font-size:12.0px;letter-spacing:0.677px;color:#222;">9.97</div>
<div class="t" style="left:958.81px;top:620.00px;font-size:12.0px;letter-spacing:0.677px;color:#222;">9.97</div>
<div style="position:absolute;left:7px;top:663.30px;width:977px;height:1px;background:#d6d6d6"></div>
<div class="t" style="left:7.53px;top:642.00px;font-size:11.8px;letter-spacing:0.057px;color:#222;">R&amp;D</div>
<div class="t" style="left:262.33px;top:642.00px;font-size:12.0px;letter-spacing:0.632px;color:#222;">102.32</div>
<div class="t" style="left:337.60px;top:642.00px;font-size:12.0px;letter-spacing:0.709px;color:#222;">66.30</div>
<div class="t" style="left:406.75px;top:642.00px;font-size:12.0px;letter-spacing:0.827px;color:#222;">11.52</div>
<div class="t" style="left:475.72px;top:642.00px;font-size:12.0px;letter-spacing:0.643px;color:#222;">14.53</div>
<div class="t" style="left:544.23px;top:642.00px;font-size:12.0px;letter-spacing:0.671px;color:#222;">17.74</div>
<div class="t" style="left:612.75px;top:642.00px;font-size:12.0px;letter-spacing:0.827px;color:#222;">11.92</div>
<div class="t" style="left:680.55px;top:642.00px;font-size:12.0px;letter-spacing:0.827px;color:#222;">11.72</div>
<div class="t" style="left:755.42px;top:642.00px;font-size:12.0px;letter-spacing:0.698px;color:#222;">6.80</div>
<div class="t" style="left:823.38px;top:642.00px;font-size:12.0px;letter-spacing:0.662px;color:#222;">5.46</div>
<div class="t" style="left:891.46px;top:642.00px;font-size:12.0px;letter-spacing:0.635px;color:#222;">4.73</div>
<div class="t" style="left:958.86px;top:642.00px;font-size:12.0px;letter-spacing:0.635px;color:#222;">4.73</div>
<div style="position:absolute;left:7px;top:685.60px;width:977px;height:1px;background:#d6d6d6"></div>
<div class="t" style="left:7.94px;top:665.00px;font-size:11.8px;letter-spacing:0.507px;color:#222;">Other</div>
<div style="position:absolute;left:291.0px;top:674px;width:10.800000000000011px;height:2px;background:#8f8f8f"></div>
<div style="position:absolute;left:359.4px;top:674px;width:10.800000000000011px;height:2px;background:#8f8f8f"></div>
<div style="position:absolute;left:428.0px;top:674px;width:10.800000000000011px;height:2px;background:#8f8f8f"></div>
<div style="position:absolute;left:497.2px;top:674px;width:10.800000000000011px;height:2px;background:#8f8f8f"></div>
<div style="position:absolute;left:566.0px;top:674px;width:10.800000000000068px;height:2px;background:#8f8f8f"></div>
<div style="position:absolute;left:634.0px;top:674px;width:10.800000000000068px;height:2px;background:#8f8f8f"></div>
<div style="position:absolute;left:701.8px;top:674px;width:10.800000000000068px;height:2px;background:#8f8f8f"></div>
<div style="position:absolute;left:769.8px;top:674px;width:10.800000000000068px;height:2px;background:#8f8f8f"></div>
<div style="position:absolute;left:837.6px;top:674px;width:10.800000000000068px;height:2px;background:#8f8f8f"></div>
<div style="position:absolute;left:905.6px;top:674px;width:10.800000000000068px;height:2px;background:#8f8f8f"></div>
<div style="position:absolute;left:973.0px;top:674px;width:10.800000000000068px;height:2px;background:#8f8f8f"></div>
<div style="position:absolute;left:7px;top:707.90px;width:977px;height:1px;background:#d6d6d6"></div>
<div class="t" style="left:7.81px;top:688.00px;font-size:10.6px;letter-spacing:0.127px;transform:scaleX(1.120);transform-origin:0 0;font-weight:bold;color:#000;">Operating Margin</div>
<div class="t" style="left:257.25px;top:688.00px;font-size:10.6px;letter-spacing:0.670px;transform:scaleX(1.120);transform-origin:0 0;font-weight:bold;color:#000;">-123.13</div>
<div class="t" style="left:332.91px;top:688.00px;font-size:10.6px;letter-spacing:0.670px;transform:scaleX(1.120);transform-origin:0 0;font-weight:bold;color:#000;">-95.41</div>
<div class="t" style="left:408.65px;top:688.00px;font-size:10.6px;letter-spacing:0.660px;transform:scaleX(1.120);transform-origin:0 0;font-weight:bold;color:#000;">-3.04</div>
<div class="t" style="left:477.85px;top:688.00px;font-size:10.6px;letter-spacing:0.660px;transform:scaleX(1.120);transform-origin:0 0;font-weight:bold;color:#000;">-5.84</div>
<div class="t" style="left:539.51px;top:688.00px;font-size:10.6px;letter-spacing:0.670px;transform:scaleX(1.120);transform-origin:0 0;font-weight:bold;color:#000;">-17.71</div>
<div class="t" style="left:615.01px;top:688.00px;font-size:10.6px;letter-spacing:0.660px;transform:scaleX(1.120);transform-origin:0 0;font-weight:bold;color:#000;">-9.53</div>
<div class="t" style="left:675.23px;top:688.00px;font-size:10.6px;letter-spacing:0.691px;transform:scaleX(1.120);transform-origin:0 0;font-weight:bold;color:#000;">-13.88</div>
<div class="t" style="left:750.61px;top:688.00px;font-size:10.6px;letter-spacing:0.691px;transform:scaleX(1.120);transform-origin:0 0;font-weight:bold;color:#000;">-1.18</div>
<div class="t" style="left:822.92px;top:688.00px;font-size:10.6px;letter-spacing:0.771px;transform:scaleX(1.120);transform-origin:0 0;font-weight:bold;color:#000;">0.33</div>
<div class="t" style="left:891.19px;top:688.00px;font-size:10.6px;letter-spacing:0.709px;transform:scaleX(1.120);transform-origin:0 0;font-weight:bold;color:#000;">6.32</div>
<div class="t" style="left:958.59px;top:688.00px;font-size:10.6px;letter-spacing:0.709px;transform:scaleX(1.120);transform-origin:0 0;font-weight:bold;color:#000;">6.32</div>
<div style="position:absolute;left:7px;top:730.20px;width:977px;height:1px;background:#d6d6d6"></div>
<div class="t" style="left:7.53px;top:709.00px;font-size:11.8px;letter-spacing:0.663px;color:#222;">Net Int Inc &amp; Other</div>
<div class="t" style="left:272.29px;top:709.00px;font-size:12.0px;letter-spacing:0.633px;color:#222;">-1.19</div>
<div class="t" style="left:340.80px;top:709.00px;font-size:12.0px;letter-spacing:0.593px;color:#222;">-0.43</div>
<div class="t" style="left:409.24px;top:709.00px;font-size:12.0px;letter-spacing:0.619px;color:#222;">-0.50</div>
<div class="t" style="left:478.40px;top:709.00px;font-size:12.0px;letter-spacing:0.643px;color:#222;">-3.06</div>
<div class="t" style="left:547.40px;top:709.00px;font-size:12.0px;letter-spacing:0.593px;color:#222;">-3.93</div>
<div class="t" style="left:615.40px;top:709.00px;font-size:12.0px;letter-spacing:0.593px;color:#222;">-1.13</div>
<div class="t" style="left:683.34px;top:709.00px;font-size:12.0px;letter-spacing:0.572px;color:#222;">-4.91</div>
<div class="t" style="left:751.04px;top:709.00px;font-size:12.0px;letter-spacing:0.619px;color:#222;">-3.50</div>
<div class="t" style="left:819.00px;top:709.00px;font-size:12.0px;letter-spacing:0.593px;color:#222;">-3.03</div>
<div class="t" style="left:886.80px;top:709.00px;font-size:12.0px;letter-spacing:0.643px;color:#222;">-2.66</div>
<div class="t" style="left:954.20px;top:709.00px;font-size:12.0px;letter-spacing:0.643px;color:#222;">-2.66</div>
<div style="position:absolute;left:7px;top:752.50px;width:977px;height:1px;background:#d6d6d6"></div>
<div class="t" style="left:7.51px;top:732.00px;font-size:10.6px;letter-spacing:-0.063px;transform:scaleX(1.120);transform-origin:0 0;font-weight:bold;color:#000;">EBT Margin</div>
<div class="t" style="left:257.33px;top:732.00px;font-size:10.6px;letter-spacing:0.666px;transform:scaleX(1.120);transform-origin:0 0;font-weight:bold;color:#000;">-124.32</div>
<div class="t" style="left:332.67px;top:732.00px;font-size:10.6px;letter-spacing:0.667px;transform:scaleX(1.120);transform-origin:0 0;font-weight:bold;color:#000;">-95.84</div>
<div class="t" style="left:408.90px;top:732.00px;font-size:10.6px;letter-spacing:0.662px;transform:scaleX(1.120);transform-origin:0 0;font-weight:bold;color:#000;">-3.55</div>
<div class="t" style="left:477.87px;top:732.00px;font-size:10.6px;letter-spacing:0.750px;transform:scaleX(1.120);transform-origin:0 0;font-weight:bold;color:#000;">-8.90</div>
<div class="t" style="left:539.27px;top:732.00px;font-size:10.6px;letter-spacing:0.667px;transform:scaleX(1.120);transform-origin:0 0;font-weight:bold;color:#000;">-21.64</div>
<div class="t" style="left:607.35px;top:732.00px;font-size:10.6px;letter-spacing:0.717px;transform:scaleX(1.120);transform-origin:0 0;font-weight:bold;color:#000;">-10.66</div>
<div class="t" style="left:675.25px;top:732.00px;font-size:10.6px;letter-spacing:0.702px;transform:scaleX(1.120);transform-origin:0 0;font-weight:bold;color:#000;">-18.79</div>
<div class="t" style="left:750.61px;top:732.00px;font-size:10.6px;letter-spacing:0.691px;transform:scaleX(1.120);transform-origin:0 0;font-weight:bold;color:#000;">-4.68</div>
<div class="t" style="left:818.49px;top:732.00px;font-size:10.6px;letter-spacing:0.664px;transform:scaleX(1.120);transform-origin:0 0;font-weight:bold;color:#000;">-2.71</div>
<div class="t" style="left:891.04px;top:732.00px;font-size:10.6px;letter-spacing:0.736px;transform:scaleX(1.120);transform-origin:0 0;font-weight:bold;color:#000;">3.66</div>
<div class="t" style="left:958.44px;top:732.00px;font-size:10.6px;letter-spacing:0.736px;transform:scaleX(1.120);transform-origin:0 0;font-weight:bold;color:#000;">3.66</div>
</body></html>
